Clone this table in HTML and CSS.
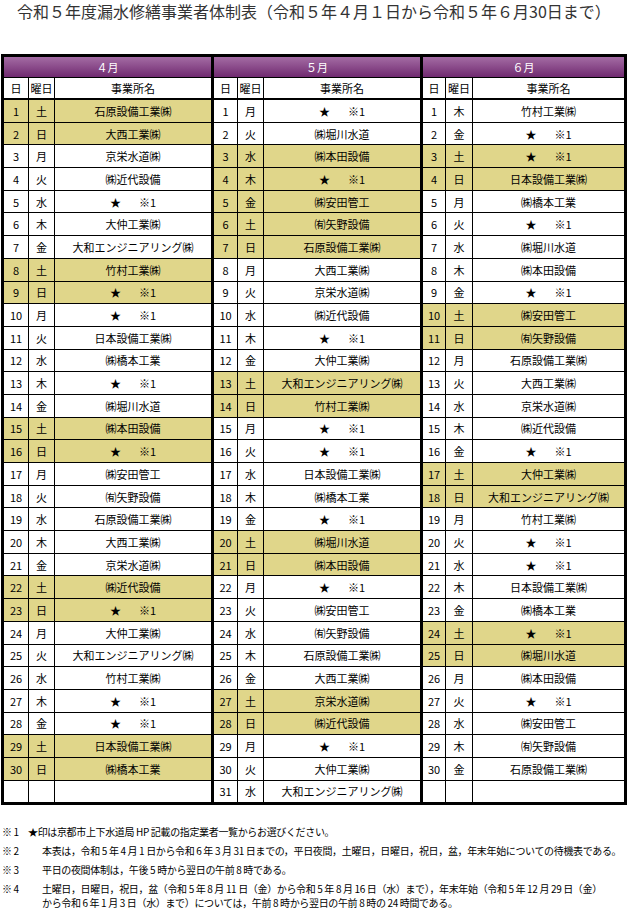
FILE: index.html
```html
<!DOCTYPE html>
<html lang="ja">
<head>
<meta charset="utf-8">
<title>令和５年度漏水修繕事業者体制表</title>
<link rel="stylesheet" href="styles.css">
</head>
<body>
<div class="page">
  <h1 class="title">令和５年度漏水修繕事業者体制表（令和５年４月１日から令和５年６月30日まで）</h1>
  <div class="sheet">
    <div class="block b1">
      <div class="month">４月</div>
      <div class="row head"><span>日</span><span>曜日</span><span>事業所名</span></div>
      <div class="row y"><span>1</span><span>土</span><span>石原設備工業㈱</span></div>
      <div class="row y"><span>2</span><span>日</span><span>大西工業㈱</span></div>
      <div class="row"><span>3</span><span>月</span><span>京栄水道㈱</span></div>
      <div class="row"><span>4</span><span>火</span><span>㈱近代設備</span></div>
      <div class="row"><span>5</span><span>水</span><span>★<i class="gap"></i>※1</span></div>
      <div class="row"><span>6</span><span>木</span><span>大仲工業㈱</span></div>
      <div class="row"><span>7</span><span>金</span><span>大和エンジニアリング㈱</span></div>
      <div class="row y"><span>8</span><span>土</span><span>竹村工業㈱</span></div>
      <div class="row y"><span>9</span><span>日</span><span>★<i class="gap"></i>※1</span></div>
      <div class="row"><span>10</span><span>月</span><span>★<i class="gap"></i>※1</span></div>
      <div class="row"><span>11</span><span>火</span><span>日本設備工業㈱</span></div>
      <div class="row"><span>12</span><span>水</span><span>㈱橋本工業</span></div>
      <div class="row"><span>13</span><span>木</span><span>★<i class="gap"></i>※1</span></div>
      <div class="row"><span>14</span><span>金</span><span>㈱堀川水道</span></div>
      <div class="row y"><span>15</span><span>土</span><span>㈱本田設備</span></div>
      <div class="row y"><span>16</span><span>日</span><span>★<i class="gap"></i>※1</span></div>
      <div class="row"><span>17</span><span>月</span><span>㈱安田管工</span></div>
      <div class="row"><span>18</span><span>火</span><span>㈲矢野設備</span></div>
      <div class="row"><span>19</span><span>水</span><span>石原設備工業㈱</span></div>
      <div class="row"><span>20</span><span>木</span><span>大西工業㈱</span></div>
      <div class="row"><span>21</span><span>金</span><span>京栄水道㈱</span></div>
      <div class="row y"><span>22</span><span>土</span><span>㈱近代設備</span></div>
      <div class="row y"><span>23</span><span>日</span><span>★<i class="gap"></i>※1</span></div>
      <div class="row"><span>24</span><span>月</span><span>大仲工業㈱</span></div>
      <div class="row"><span>25</span><span>火</span><span>大和エンジニアリング㈱</span></div>
      <div class="row"><span>26</span><span>水</span><span>竹村工業㈱</span></div>
      <div class="row"><span>27</span><span>木</span><span>★<i class="gap"></i>※1</span></div>
      <div class="row"><span>28</span><span>金</span><span>★<i class="gap"></i>※1</span></div>
      <div class="row y"><span>29</span><span>土</span><span>日本設備工業㈱</span></div>
      <div class="row y"><span>30</span><span>日</span><span>㈱橋本工業</span></div>
      <div class="row"><span></span><span></span><span></span></div>
    </div>
    <div class="block b2">
      <div class="month">５月</div>
      <div class="row head"><span>日</span><span>曜日</span><span>事業所名</span></div>
      <div class="row"><span>1</span><span>月</span><span>★<i class="gap"></i>※1</span></div>
      <div class="row"><span>2</span><span>火</span><span>㈱堀川水道</span></div>
      <div class="row y"><span>3</span><span>水</span><span>㈱本田設備</span></div>
      <div class="row y"><span>4</span><span>木</span><span>★<i class="gap"></i>※1</span></div>
      <div class="row y"><span>5</span><span>金</span><span>㈱安田管工</span></div>
      <div class="row y"><span>6</span><span>土</span><span>㈲矢野設備</span></div>
      <div class="row y"><span>7</span><span>日</span><span>石原設備工業㈱</span></div>
      <div class="row"><span>8</span><span>月</span><span>大西工業㈱</span></div>
      <div class="row"><span>9</span><span>火</span><span>京栄水道㈱</span></div>
      <div class="row"><span>10</span><span>水</span><span>㈱近代設備</span></div>
      <div class="row"><span>11</span><span>木</span><span>★<i class="gap"></i>※1</span></div>
      <div class="row"><span>12</span><span>金</span><span>大仲工業㈱</span></div>
      <div class="row y"><span>13</span><span>土</span><span>大和エンジニアリング㈱</span></div>
      <div class="row y"><span>14</span><span>日</span><span>竹村工業㈱</span></div>
      <div class="row"><span>15</span><span>月</span><span>★<i class="gap"></i>※1</span></div>
      <div class="row"><span>16</span><span>火</span><span>★<i class="gap"></i>※1</span></div>
      <div class="row"><span>17</span><span>水</span><span>日本設備工業㈱</span></div>
      <div class="row"><span>18</span><span>木</span><span>㈱橋本工業</span></div>
      <div class="row"><span>19</span><span>金</span><span>★<i class="gap"></i>※1</span></div>
      <div class="row y"><span>20</span><span>土</span><span>㈱堀川水道</span></div>
      <div class="row y"><span>21</span><span>日</span><span>㈱本田設備</span></div>
      <div class="row"><span>22</span><span>月</span><span>★<i class="gap"></i>※1</span></div>
      <div class="row"><span>23</span><span>火</span><span>㈱安田管工</span></div>
      <div class="row"><span>24</span><span>水</span><span>㈲矢野設備</span></div>
      <div class="row"><span>25</span><span>木</span><span>石原設備工業㈱</span></div>
      <div class="row"><span>26</span><span>金</span><span>大西工業㈱</span></div>
      <div class="row y"><span>27</span><span>土</span><span>京栄水道㈱</span></div>
      <div class="row y"><span>28</span><span>日</span><span>㈱近代設備</span></div>
      <div class="row"><span>29</span><span>月</span><span>★<i class="gap"></i>※1</span></div>
      <div class="row"><span>30</span><span>火</span><span>大仲工業㈱</span></div>
      <div class="row"><span>31</span><span>水</span><span>大和エンジニアリング㈱</span></div>
    </div>
    <div class="block b3">
      <div class="month">６月</div>
      <div class="row head"><span>日</span><span>曜日</span><span>事業所名</span></div>
      <div class="row"><span>1</span><span>木</span><span>竹村工業㈱</span></div>
      <div class="row"><span>2</span><span>金</span><span>★<i class="gap"></i>※1</span></div>
      <div class="row y"><span>3</span><span>土</span><span>★<i class="gap"></i>※1</span></div>
      <div class="row y"><span>4</span><span>日</span><span>日本設備工業㈱</span></div>
      <div class="row"><span>5</span><span>月</span><span>㈱橋本工業</span></div>
      <div class="row"><span>6</span><span>火</span><span>★<i class="gap"></i>※1</span></div>
      <div class="row"><span>7</span><span>水</span><span>㈱堀川水道</span></div>
      <div class="row"><span>8</span><span>木</span><span>㈱本田設備</span></div>
      <div class="row"><span>9</span><span>金</span><span>★<i class="gap"></i>※1</span></div>
      <div class="row y"><span>10</span><span>土</span><span>㈱安田管工</span></div>
      <div class="row y"><span>11</span><span>日</span><span>㈲矢野設備</span></div>
      <div class="row"><span>12</span><span>月</span><span>石原設備工業㈱</span></div>
      <div class="row"><span>13</span><span>火</span><span>大西工業㈱</span></div>
      <div class="row"><span>14</span><span>水</span><span>京栄水道㈱</span></div>
      <div class="row"><span>15</span><span>木</span><span>㈱近代設備</span></div>
      <div class="row"><span>16</span><span>金</span><span>★<i class="gap"></i>※1</span></div>
      <div class="row y"><span>17</span><span>土</span><span>大仲工業㈱</span></div>
      <div class="row y"><span>18</span><span>日</span><span>大和エンジニアリング㈱</span></div>
      <div class="row"><span>19</span><span>月</span><span>竹村工業㈱</span></div>
      <div class="row"><span>20</span><span>火</span><span>★<i class="gap"></i>※1</span></div>
      <div class="row"><span>21</span><span>水</span><span>★<i class="gap"></i>※1</span></div>
      <div class="row"><span>22</span><span>木</span><span>日本設備工業㈱</span></div>
      <div class="row"><span>23</span><span>金</span><span>㈱橋本工業</span></div>
      <div class="row y"><span>24</span><span>土</span><span>★<i class="gap"></i>※1</span></div>
      <div class="row y"><span>25</span><span>日</span><span>㈱堀川水道</span></div>
      <div class="row"><span>26</span><span>月</span><span>㈱本田設備</span></div>
      <div class="row"><span>27</span><span>火</span><span>★<i class="gap"></i>※1</span></div>
      <div class="row"><span>28</span><span>水</span><span>㈱安田管工</span></div>
      <div class="row"><span>29</span><span>木</span><span>㈲矢野設備</span></div>
      <div class="row"><span>30</span><span>金</span><span>石原設備工業㈱</span></div>
      <div class="row"><span></span><span></span><span></span></div>
    </div>
  </div>
  <div class="notes">
    <p class="note"><span class="lbl short">※ 1</span><span class="txt">★印は京都市上下水道局 HP 記載の指定業者一覧からお選びください。</span></p>
    <p class="note"><span class="lbl">※ 2</span><span class="txt">本表は，令和 5 年 4 月 1 日から令和 6 年 3 月 31 日までの，平日夜間，土曜日，日曜日，祝日，盆，年末年始についての待機表である。</span></p>
    <p class="note"><span class="lbl">※ 3</span><span class="txt">平日の夜間体制は，午後 5 時から翌日の午前 8 時である。</span></p>
    <p class="note"><span class="lbl">※ 4</span><span class="txt">土曜日，日曜日，祝日，盆（令和 5 年 8 月 11 日（金）から令和 5 年 8 月 16 日（水）まで），年末年始（令和 5 年 12 月 29 日（金）<br>から令和 6 年 1 月 3 日（水）まで）については，午前 8 時から翌日の午前 8 時の 24 時間である。</span></p>
  </div>
</div>
</body>
</html>
```
FILE: styles.css
```css
body {
  margin: 0;
  background: #fff;
  color: #000;
  font-family: "Noto Sans CJK JP", "Noto Sans", sans-serif;
}

.page {
  width: 626px;
  margin-left: 1px;
}

.title {
  margin: 2px 0 0;
  height: 18px;
  line-height: 18px;
  font-size: 16px;
  font-weight: normal;
  text-align: center;
  color: #333;
  white-space: nowrap;
}

.sheet {
  display: flex;
  gap: 3px;
  padding: 3px;
  margin-top: 34px;
  background: #000;
}

.block {
  display: flex;
  flex-direction: column;
  gap: 1px;
}

.b1 { width: 207px; }
.b2 { width: 206px; }
.b3 { width: 201px; }

.month {
  height: 20px;
  background: linear-gradient(#a46ca4, #702a70);
  color: #fff;
  font-size: 11px;
  display: flex;
  align-items: center;
  justify-content: center;
}

.row {
  display: grid;
  grid-template-columns: 24px 25px 1fr;
  gap: 1px;
  height: 21.7px;
}

.b2 .row { grid-template-columns: 23px 25px 1fr; }
.b3 .row { grid-template-columns: 22px 26px 1fr; }

.row > span {
  background: #fff;
  display: flex;
  align-items: center;
  justify-content: center;
  font-size: 11px;
  white-space: nowrap;
  overflow: hidden;
}

.row.head {
  height: 20px;
  margin-bottom: 1px;
}

.row.y > span {
  background: #e0d68a;
}

.gap {
  display: inline-block;
  width: 18px;
}

.notes {
  margin-top: 20px;
  padding-left: 1px;
}

.note {
  display: flex;
  margin: 0 0 5px;
  font-size: 10px;
  line-height: 14px;
  letter-spacing: -0.35px;
  white-space: nowrap;
}

.lbl {
  flex: none;
  width: 40px;
}

.lbl.short {
  width: 26px;
}
```
